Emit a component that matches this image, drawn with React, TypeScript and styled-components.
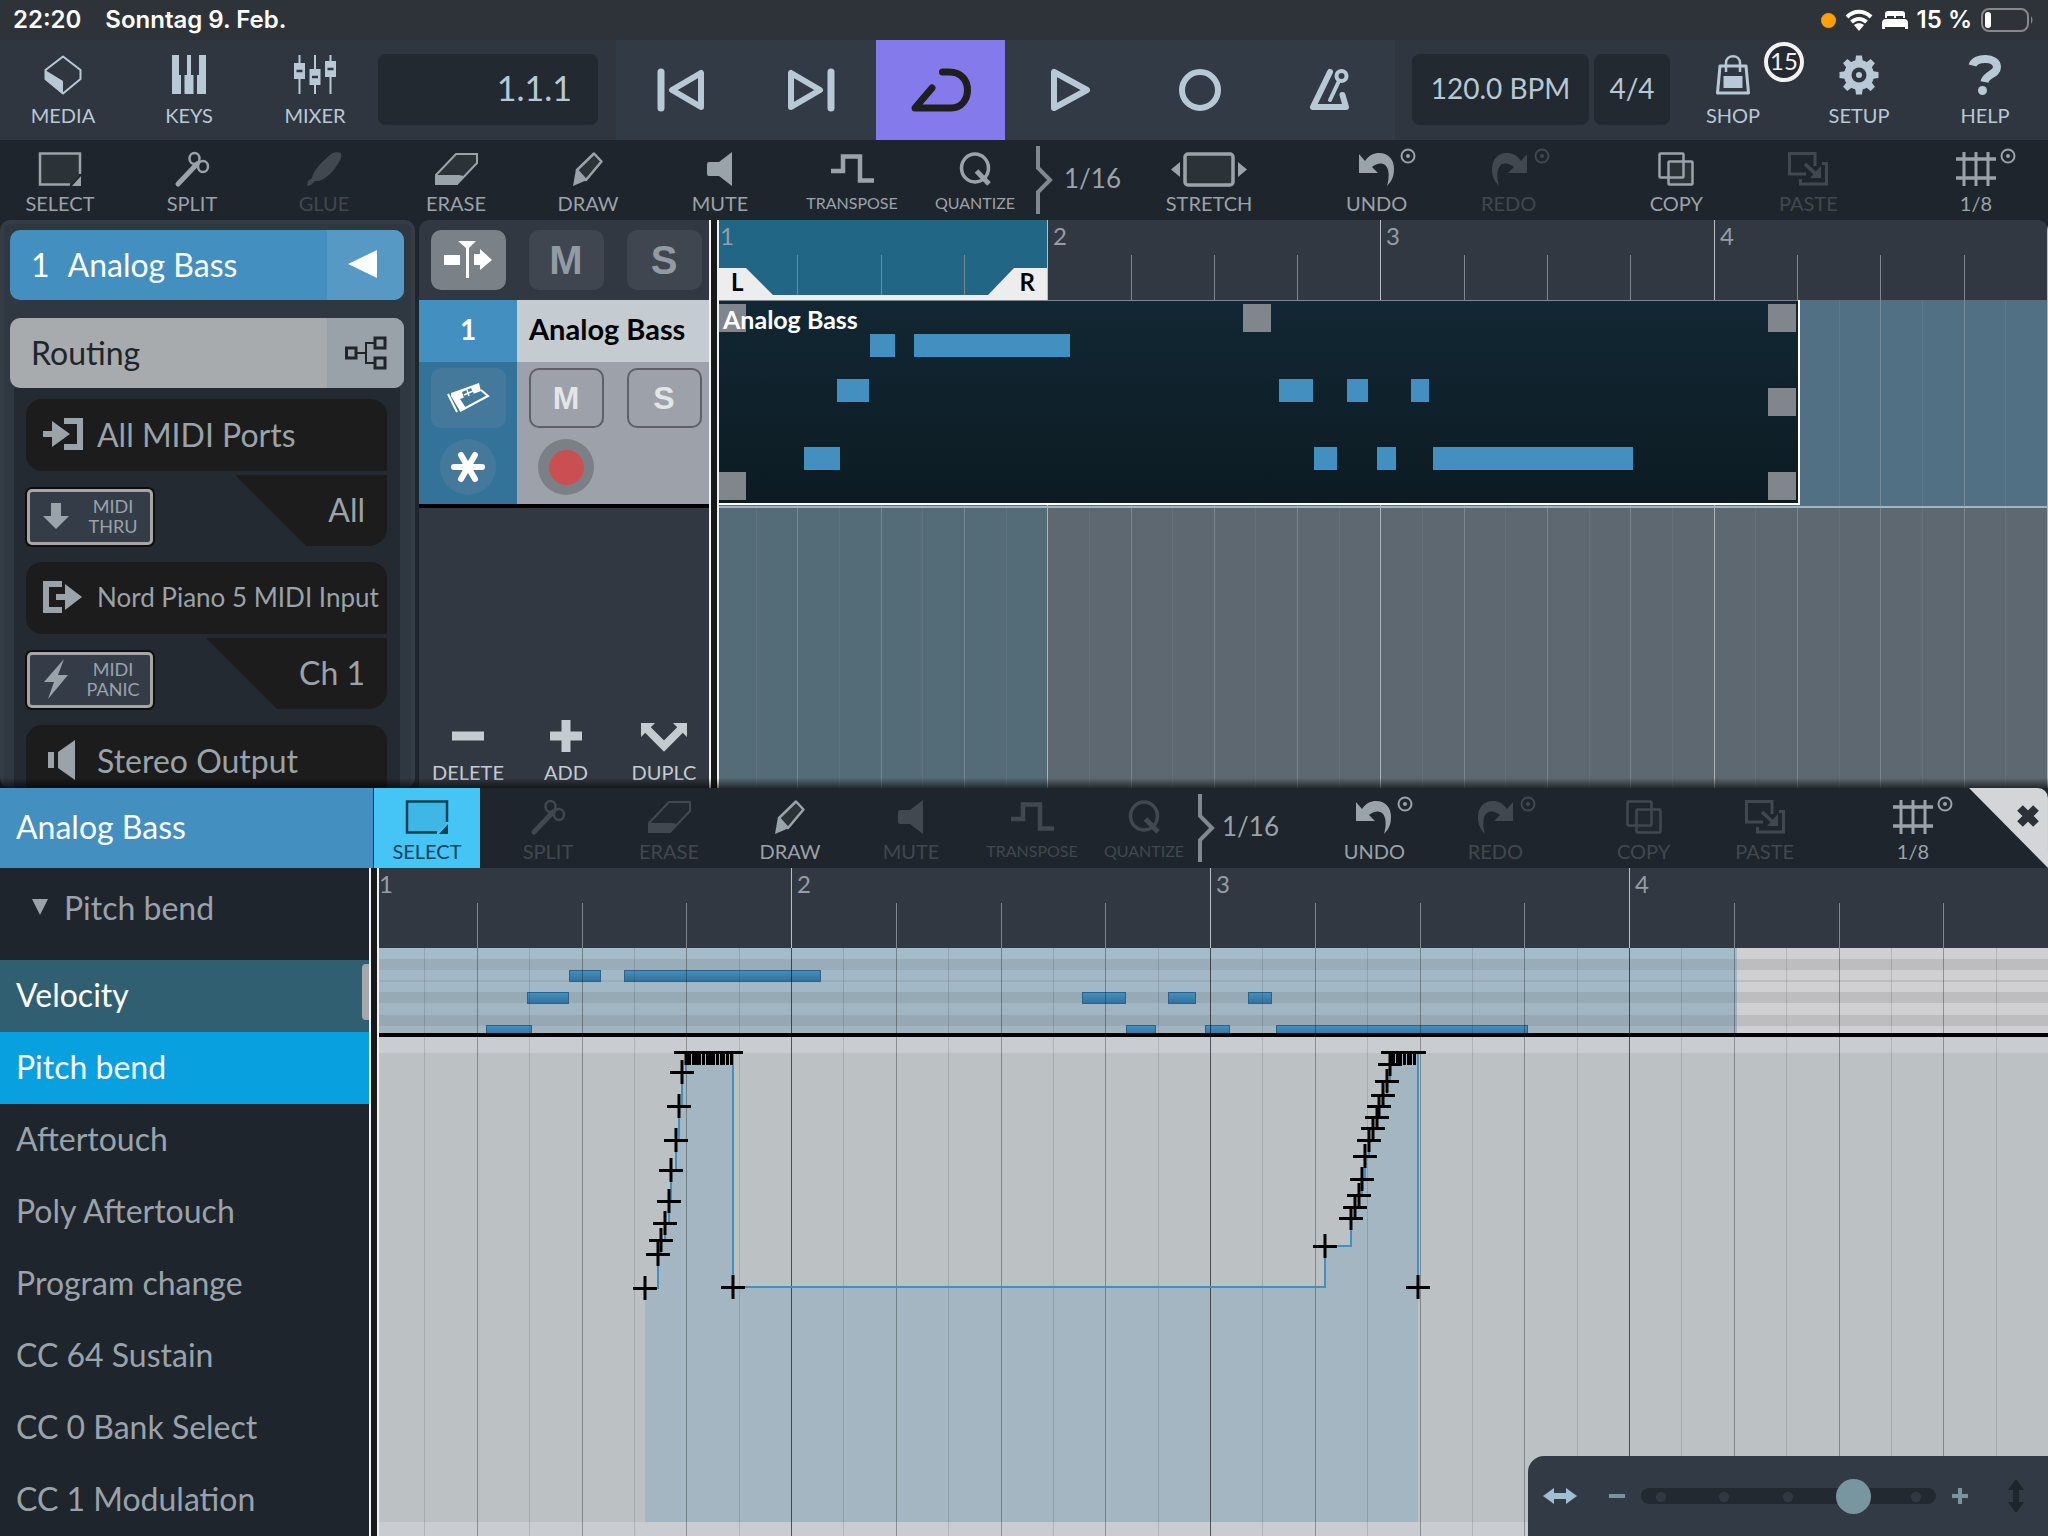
import React from "react";
import styled, { createGlobalStyle, css } from "styled-components";

const GlobalStyle = createGlobalStyle`
  *, *::before, *::after { box-sizing: border-box; }
  html, body { margin: 0; background: #1f252c; }
  body { font-family: Lato, "Open Sans", sans-serif; }
  button { font: inherit; color: inherit; border: 0; padding: 0; background: none; cursor: pointer; }
  h1, h2, p, ul { margin: 0; padding: 0; font-weight: 400; }
  ul { list-style: none; }
  svg { display: block; flex: none; overflow: visible; }
`;

/* ---------- shared ---------- */

const Screen = styled.div`
  display: flex;
  flex-direction: column;
  height: 100vh;
  min-height: 900px;
  overflow: hidden;
  background: #1f252c;
  color: #9aa2aa;
`;

type GlyphProps = { w: number; h: number; children: React.ReactNode };
const Glyph = ({ w, h, children }: GlyphProps) => (
  <svg width={w} height={h} viewBox={`0 0 ${w} ${h}`} fill="none" stroke="currentColor" aria-hidden="true">
    {children}
  </svg>
);

/* ---------- icons ---------- */

const solid = { fill: "currentColor", stroke: "none" };
const tint = { fill: "currentColor", fillOpacity: 0.1 };

const MediaIcon = () => (
  <Glyph w={40} h={40}>
    <path d="M20 1.5 L37.5 15 V24 L20 38.5 L2.5 24 V15 Z" strokeWidth={2} strokeLinejoin="round" />
    <path d="M2 15 L20 26 V39 L2 24.500 Z" {...solid} />
  </Glyph>
);
const KeysIcon = () => (
  <Glyph w={34} h={40}>
    <path d="M0 0 H7 V20 H9 V39 H0 Z M15 0 H19 V20 H21.500 V39 H12.500 V20 H15 Z M27 0 H34 V39 H25 V20 H27 Z" {...solid} />
  </Glyph>
);
const MixerIcon = () => (
  <Glyph w={42} h={40}>
    <path d="M5.500 0 V39 M21 0 V39 M36.500 0 V39" strokeWidth={2} />
    <path d="M0 8 H11 V24 H0 Z M15.500 14 H26.500 V30 H15.500 Z M31 6 H42 V22 H31 Z" {...solid} />
    <path d="M2.500 16 H8.500 M18 22 H24 M33.500 14 H39.500" stroke="#2f3640" strokeWidth={2.5} />
  </Glyph>
);
const PrevIcon = () => (
  <Glyph w={48} h={44}>
    <path d="M4 4 V40" strokeWidth={7} strokeLinecap="round" />
    <path d="M44 5 V39 L15 22 Z" strokeWidth={6} strokeLinejoin="round" />
  </Glyph>
);
const NextIcon = () => (
  <Glyph w={48} h={44}>
    <path d="M44 4 V40" strokeWidth={7} strokeLinecap="round" />
    <path d="M4 5 V39 L33 22 Z" strokeWidth={6} strokeLinejoin="round" />
  </Glyph>
);
const CycleIcon = () => (
  <Glyph w={60} h={44}>
    <path
      d="M31.500 4 H38 C51 4 56.500 13 56.500 22 C56.500 31 51 40 40 40 H4 L21 20"
      strokeWidth={7}
      strokeLinecap="round"
      strokeLinejoin="round"
    />
  </Glyph>
);
const PlayIcon = () => (
  <Glyph w={41} h={44}>
    <path d="M4 4 V40 L37 22 Z" strokeWidth={6} strokeLinejoin="round" />
  </Glyph>
);
const RecordIcon = () => (
  <Glyph w={42} h={42}>
    <circle cx="21" cy="21" r="18" strokeWidth={6} />
  </Glyph>
);
const MetronomeIcon = () => (
  <Glyph w={42} h={44}>
    <path d="M21 4 L4 39 H37 L33.500 27" strokeWidth={6} strokeLinecap="round" strokeLinejoin="round" />
    <circle cx="32.500" cy="8" r="5" strokeWidth={4} />
    <path d="M30 13 L21 32" strokeWidth={4} strokeLinecap="round" />
  </Glyph>
);
const ShopIcon = () => (
  <Glyph w={34} h={40}>
    <path d="M4 11 H30 L32.500 38 H1.500 Z" strokeWidth={3} strokeLinejoin="round" />
    <path d="M10 17 V8 C10 -1 24 -1 24 8 V17" strokeWidth={2.5} />
    <path d="M7.500 21 H26.500 V33 H7.500 Z" {...solid} />
  </Glyph>
);
const GearIcon = () => (
  <Glyph w={42} h={40}>
    {[0, 45, 90, 135, 180, 225, 270, 315].map((a) => (
      <path key={a} d="M17 8 L18 0.500 H24 L25 8 Z" transform={`rotate(${a} 21 20)`} {...solid} strokeLinejoin="round" />
    ))}
    <circle cx="21" cy="20" r="15" {...solid} />
    <circle cx="21" cy="20" r="7.500" fill="#2f3640" stroke="none" />
    <circle cx="21" cy="20" r="3" {...solid} />
  </Glyph>
);
const HelpIcon = () => (
  <Glyph w={34} h={40}>
    <path d="M4.500 10.500 C7 1.500 29 1.500 29 12 C29 19.500 18 19 16.500 27" strokeWidth={8} />
    <circle cx="14.500" cy="35.500" r="4.500" {...solid} />
  </Glyph>
);

const SelectIcon = () => (
  <Glyph w={42} h={34}>
    <path d="M41 22 V1.500 H1 V32.500 H31" strokeWidth={2.5} />
    <path d="M2 2 H40 V24 L32 32 H2 Z" {...tint} stroke="none" />
    <path d="M42 24 V34 H33 Z" {...solid} />
  </Glyph>
);
const SplitIcon = () => (
  <Glyph w={34} h={34}>
    <path d="M3 32 L22 12" strokeWidth={5} strokeLinecap="round" />
    <ellipse cx="19.500" cy="6.500" rx="5" ry="5.500" strokeWidth={2.5} />
    <ellipse cx="28" cy="14.500" rx="5" ry="5.500" strokeWidth={2.5} />
  </Glyph>
);
const GlueIcon = () => (
  <Glyph w={35} h={34}>
    <path d="M0 34 L1 29 L5 26 C6 18 17 8 24 2 C27 0 31 0 34 1 C35 4 34 7 32 10 C27 19 19 27 12 29 L8 29 L4 33 Z" {...solid} />
  </Glyph>
);
const EraseIcon = () => (
  <Glyph w={43} h={34}>
    <path d="M21 2 H42 V11 L22 32 H1 V23 Z" strokeWidth={2} {...tint} />
    <path d="M1 23 H24 L22 33 H0 Z M24 23 L29 24 L22 33 H20 Z" {...solid} />
  </Glyph>
);
const DrawIcon = () => (
  <Glyph w={30} h={34}>
    <path d="M21 1.500 L28.500 9.500 L13 28 L4 18 Z" strokeWidth={2.5} strokeLinejoin="round" {...tint} />
    <path d="M3 17 L14 28 L0 34 Z" {...solid} />
  </Glyph>
);
const MuteIcon = () => (
  <Glyph w={27} h={34}>
    <path d="M2 10 H12 L25 0 V34 L12 24 H2 Q0 24 0 22 V12 Q0 10 2 10 Z" {...solid} />
  </Glyph>
);
const TransposeIcon = () => (
  <Glyph w={43} h={34}>
    <path d="M0 19 H12 V4.500 H29 V28.500 H43" strokeWidth={4.5} />
  </Glyph>
);
const QuantizeIcon = () => (
  <Glyph w={31} h={34}>
    <ellipse cx="15" cy="16" rx="13.500" ry="14" strokeWidth={3.5} />
    <path d="M16.500 19 L29 32" strokeWidth={5} />
  </Glyph>
);
const BracketIcon = () => (
  <Glyph w={16} h={68}>
    <path d="M2 0 V22 L14 34 L2 46 V68" strokeWidth={4} opacity={0.8} />
  </Glyph>
);
const StretchIcon = () => (
  <Glyph w={76} h={34}>
    <rect x="14" y="2" width="48" height="31" rx="3" strokeWidth={3.5} {...tint} />
    <path d="M9 10 V25 L0 17.500 Z M67 10 V25 L76 17.500 Z" {...solid} />
  </Glyph>
);
const HistoryDot = () => (
  <g>
    <circle cx="49" cy="4" r="6.500" strokeWidth={2} />
    <circle cx="49" cy="4" r="2" {...solid} />
  </g>
);
const arrowPath = "M0 2 L6 9 C10 3 15 1 20 1 C30 1 35 8 35 17 C35 24 33 29 28 34 C30 27 30 22 29 18 C27 10 19 10 13 15 L19 21 H0 Z";
const UndoIcon = () => (
  <Glyph w={36} h={34}>
    <path d={arrowPath} {...solid} />
    <HistoryDot />
  </Glyph>
);
const RedoIcon = () => (
  <Glyph w={36} h={34}>
    <path d={arrowPath} transform="translate(36 0) scale(-1 1)" {...solid} />
    <g transform="translate(2 0)">
      <HistoryDot />
    </g>
  </Glyph>
);
const CopyIcon = () => (
  <Glyph w={36} h={34}>
    <rect x="1.500" y="1.500" width="24" height="24" rx="1" strokeWidth={2.5} />
    <rect x="10.500" y="9.500" width="24" height="23" rx="1" strokeWidth={2.5} {...tint} />
  </Glyph>
);
const PasteIcon = () => (
  <Glyph w={40} h={34}>
    <path d="M18 22 H1.500 V1.500 H27 V14" strokeWidth={3} />
    <path d="M17 12 L31 25" strokeWidth={3.5} />
    <path d="M33 14 V26 H22 Z" {...solid} />
    <path d="M34 11.500 H38.500 V32 H12.500 V27" strokeWidth={3} />
  </Glyph>
);
const GridIcon = () => (
  <Glyph w={40} h={34}>
    <path d="M8 0 V34 M20 0 V34 M32 0 V34" strokeWidth={3} />
    <path d="M0 7 H40 M0 26 H40" strokeWidth={3.5} />
    <g transform="translate(3 0)">
      <HistoryDot />
    </g>
  </Glyph>
);

const RoutingIcon = () => (
  <Glyph w={42} h={34}>
    <path d="M12 17 H21 M30 7 H21 V27 H30" strokeWidth={2} />
    <path d="M1.500 12 H11 V22 H1.500 Z M30 2 H40 V12 H30 Z M30 22 H40 V32 H30 Z" strokeWidth={3} />
  </Glyph>
);
const PortInIcon = () => (
  <Glyph w={40} h={32}>
    <path d="M0 13 H9 V3 L27 16 L9 29 V19 H0 Z" {...solid} />
    <path d="M21 3 H37 V29 H21" strokeWidth={6} />
  </Glyph>
);
const PortOutIcon = () => (
  <Glyph w={40} h={32}>
    <path d="M19 3 H3 V29 H19" strokeWidth={6} />
    <path d="M13 13 H22 V3 L39 16 L22 29 V19 H13 Z" {...solid} />
  </Glyph>
);
const OutputIcon = () => (
  <Glyph w={40} h={40}>
    <path d="M5 12 H11 V28 H5 Z M15 12 L32 0 V40 L15 28 Z" {...solid} />
  </Glyph>
);
const DownIcon = () => (
  <Glyph w={26} h={26}>
    <path d="M8 0 H18 V13 H26 L13 26 L0 13 H8 Z" {...solid} />
  </Glyph>
);
const BoltIcon = () => (
  <Glyph w={26} h={40}>
    <path d="M21 0 L1 23 H11 L5 40 L25 16 H15 Z" {...solid} />
  </Glyph>
);
const FollowIcon = () => (
  <Glyph w={48} h={38}>
    <path d="M0 14 H16 V24 H0 Z M30 13 H36 V8 L48 19 L36 29 V24 H30 Z M14 0 H32 L25 7 V37 H22 V7 Z" {...solid} />
  </Glyph>
);
const SynthIcon = () => (
  <Glyph w={42} h={32}>
    <path d="M4 11 L32 1 L34 9 L13 17 L19 26 L13 29 L4 14 Z" {...solid} />
    <path d="M13 29 L41 14 L34 8 M1 12 L10 30" strokeWidth={2} />
    <path d="M15 10 L24 6 L27 12 L17 16 Z" fill="#44799b" stroke="none" />
    <path d="M17 13 L26 9 M20 8 L22 14" strokeWidth={1.5} />
  </Glyph>
);
const AsteriskIcon = () => (
  <Glyph w={34} h={32}>
    <path d="M3 16 H31 M10 4 L24 28 M24 4 L10 28" strokeWidth={6} strokeLinecap="round" />
  </Glyph>
);
const MinusIcon = () => (
  <Glyph w={32} h={32}>
    <path d="M0 16 H32" strokeWidth={9} />
  </Glyph>
);
const PlusIcon = () => (
  <Glyph w={32} h={32}>
    <path d="M0 16 H32 M16 0 V32" strokeWidth={9} />
  </Glyph>
);
const DuplicateIcon = () => (
  <Glyph w={48} h={32}>
    <path d="M6 8 L24 26 L42 8" strokeWidth={8} />
    <path d="M1 3 H15 L1 17 Z M47 3 H33 L47 17 Z" {...solid} />
  </Glyph>
);

/* ---------- status bar ---------- */

const StatusBar = styled.header`
  display: flex;
  align-items: center;
  justify-content: space-between;
  flex: none;
  height: 40px;
  padding: 0 14px 0 13px;
  background: #2d3338;
  color: #fff;
  font: 600 24px/40px Inter, Roboto, sans-serif;
`;
const StatusGroup = styled.div<{ $gap: number }>`
  display: flex;
  align-items: center;
  gap: ${(p) => p.$gap}px;
`;
const PrivacyDot = styled.span`
  width: 15px;
  height: 15px;
  border-radius: 50%;
  background: #ff9f0a;
`;

/* ---------- transport bar ---------- */

const TransportBar = styled.nav`
  display: grid;
  grid-template-columns: 378fr 238fr 779fr 275fr 378fr;
  flex: none;
  height: 100px;
  background: #2f3640;
  color: #b8c9d6;
`;
const BarGroup = styled.div`
  display: grid;
  grid-auto-flow: column;
  grid-auto-columns: 1fr;
`;
const BarButton = styled.button`
  display: flex;
  flex-direction: column;
  align-items: center;
  gap: 8px;
  padding-top: 15px;
  font-size: 20px;
  line-height: 24px;
`;
const BadgeAnchor = styled.span`
  position: relative;
`;
const Badge = styled.span`
  position: absolute;
  left: 48px;
  top: -13px;
  width: 40px;
  height: 40px;
  border: 4px solid #f2f2f2;
  border-radius: 50%;
  background: #232a32;
  color: #f2f2f2;
  font-size: 24px;
  line-height: 30px;
  text-align: center;
`;
const ReadoutCell = styled.div`
  display: flex;
  gap: 5px;
  padding: 14px 18px 15px 0;
`;
const TempoCell = styled(ReadoutCell)`
  padding: 14px 0 15px 17px;
`;
const Readout = styled.button<{ $grow: number; $large?: boolean }>`
  flex: ${(p) => p.$grow} 1 0;
  padding-bottom: 4px;
  border-radius: 8px;
  background: #232931;
  font-size: ${(p) => (p.$large ? 34 : 28)}px;
  ${(p) =>
    p.$large &&
    css`
      padding-right: 26px;
      text-align: right;
    `}
`;
const TransportGroup = styled(BarGroup)`
  background: #323b45;
`;
const TransportButton = styled.button<{ $on?: boolean }>`
  display: grid;
  place-items: center;
  background: ${(p) => (p.$on ? "#857aeb" : "none")};
  color: ${(p) => (p.$on ? "#1f1f1f" : "inherit")};
`;

/* ---------- tool bars ---------- */

const ToolBar = styled.nav`
  display: flex;
  flex: none;
  height: 80px;
  padding-right: 12px;
  background: #1f252c;
`;
const ToolGroup = styled.div<{ $gap: number; $push?: boolean }>`
  display: flex;
  gap: ${(p) => p.$gap}px;
  margin-left: ${(p) => (p.$push ? "auto" : "0")};
`;
const ToolButton = styled.button<{ $width: number; $active?: boolean; $small?: boolean }>`
  display: flex;
  flex-direction: column;
  align-items: center;
  gap: 5px;
  width: ${(p) => p.$width}px;
  padding-top: 12px;
  font-size: ${(p) => (p.$small ? 16 : 20)}px;
  line-height: 24px;
  background: ${(p) => (p.$active ? "#45c4f6" : "none")};
  color: ${(p) => (p.$active ? "#0e4257" : "#9aa2aa")};
  &:disabled { color: #41484f; }
`;
const QuantizeValue = styled.button<{ $tight?: boolean }>`
  display: flex;
  align-items: center;
  gap: ${(p) => (p.$tight ? 8 : 12)}px;
  margin: ${(p) => (p.$tight ? "0 0 0 10px" : "0 28px 0 10px")};
  padding-bottom: 1px;
  font-size: 26px;
  line-height: 64px;
`;
const QuantizeText = styled.span`
  padding-bottom: 4px;
`;

type Tool = { label: string; icon: () => React.ReactElement; off?: boolean; active?: boolean; small?: boolean; width?: number };
const Tools = ({ items, width }: { items: Tool[]; width: number }) => (
  <>
    {items.map(({ label, icon: Icon, off, active, small, width: own }) => (
      <ToolButton key={label} type="button" disabled={off} $active={active} $small={small} $width={own ?? width}>
        <Icon />
        {label}
      </ToolButton>
    ))}
  </>
);

/* ---------- arrange area ---------- */

const Arrange = styled.main`
  position: relative;
  display: grid;
  grid-template-columns: 415px 294px 10px minmax(0, 1fr);
  flex: 568 1 0;
  min-height: 0;
  &::after {
    content: "";
    position: absolute;
    inset: auto 0 0;
    height: 10px;
    background: linear-gradient(transparent, rgba(0, 0, 0, 0.6));
    pointer-events: none;
  }
`;
const Inspector = styled.section`
  display: flex;
  flex-direction: column;
  min-height: 0;
  overflow: hidden;
  padding: 6px 7px 0 6px;
  border: 4px solid #343c46;
  border-bottom: 0;
  border-radius: 10px;
  background: #2f3740;
`;
const SectionHeader = styled.button<{ $tone: "blue" | "grey" }>`
  display: grid;
  grid-template-columns: 1fr 77px;
  align-items: stretch;
  flex: none;
  height: 70px;
  overflow: hidden;
  border-radius: 10px;
  font-size: 32px;
  line-height: 70px;
  text-align: left;
  background: ${(p) => (p.$tone === "blue" ? "#438fbf" : "#a7abae")};
  color: ${(p) => (p.$tone === "blue" ? "#fff" : "#20252b")};
  & + & { margin-top: 18px; }
`;
const SectionTitle = styled.span`
  display: flex;
  gap: 18px;
  padding-left: 21px;
`;
const SectionSide = styled.span<{ $tone: "blue" | "grey" }>`
  display: grid;
  place-items: center;
  background: ${(p) => (p.$tone === "blue" ? "#5699c5" : "#98a2a8")};
`;
const RoutingList = styled.div`
  display: flex;
  flex-direction: column;
  gap: 16px;
  flex: 1;
  min-height: 0;
  margin: 0 4px;
  padding: 11px 13px 0 12px;
  overflow: hidden;
  background: #232a32;
`;
const RoutingBlock = styled.div`
  display: flex;
  flex-direction: column;
  flex: none;
  gap: 4px;
`;
const PortButton = styled.button<{ $small?: boolean }>`
  display: flex;
  align-items: center;
  gap: 14px;
  height: 72px;
  padding: 0 0 2px 17px;
  overflow: hidden;
  border-radius: 16px 16px 0 16px;
  background: #1c1c1c;
  font-size: ${(p) => (p.$small ? 26 : 32)}px;
  white-space: nowrap;
`;
const SubRow = styled.div`
  display: flex;
  align-items: flex-end;
  justify-content: space-between;
  height: 71px;
`;
const MidiButton = styled.button`
  display: grid;
  grid-template-columns: 52px 1fr;
  align-items: center;
  justify-items: center;
  width: 128px;
  height: 58px;
  padding: 0 6px 2px 0;
  border: 4px solid #a6a6a6;
  outline: 2px solid #0d0d0d;
  outline-offset: -1px;
  border-radius: 6px;
  background: #343d47;
  font-size: 18px;
  line-height: 20px;
`;
const ChannelButton = styled.button<{ $width: number }>`
  width: ${(p) => p.$width}px;
  height: 71px;
  padding: 0 22px 2px 0;
  border-bottom-right-radius: 18px;
  background: #1c1c1c;
  clip-path: polygon(0 0, 100% 0, 100% 100%, 71px 100%);
  font-size: 32px;
  text-align: right;
`;

const TrackPanel = styled.section`
  display: flex;
  flex-direction: column;
  margin-left: 4px;
  min-height: 0;
  overflow: hidden;
  border-radius: 10px 0 0 0;
  background: #323841;
`;
const TrackGrid = styled.div`
  display: grid;
  grid-template-columns: repeat(3, 98px);
  justify-items: center;
`;
const GlobalRow = styled(TrackGrid)`
  flex: none;
  height: 80px;
  padding-top: 10px;
`;
const StateButton = styled.button<{ $look: "lit" | "dim" | "outline" | "tint" }>`
  display: grid;
  place-items: center;
  width: 75px;
  height: 60px;
  border-radius: 10px;
  font-family: "Liberation Sans", sans-serif;
  font-weight: 700;
  font-size: ${(p) => (p.$look === "dim" ? 40 : 32)}px;
  line-height: 60px;
  ${(p) => p.$look === "lit" && "background: #7a8287; color: #fff;"}
  ${(p) => p.$look === "dim" && "background: #3f464f; color: #929ba3;"}
  ${(p) => p.$look === "outline" && "box-shadow: inset 0 0 0 2px #5d6069; color: #e4e5e6;"}
  ${(p) => p.$look === "tint" && "background: #44799b; color: #fff;"}
`;
const Track = styled.article`
  display: grid;
  grid-template-columns: 98px 1fr;
  grid-template-rows: 62px 142px;
  flex: none;
  border-bottom: 4px solid #000;
  font-weight: 700;
  font-size: 28px;
  line-height: 58px;
`;
const TrackNumber = styled.div`
  background: #438fbf;
  color: #fff;
  text-align: center;
`;
const TrackName = styled.h2`
  padding-left: 12px;
  background: #c4cbd1;
  color: #000;
  font-size: 29px;
  font-weight: 700;
  white-space: nowrap;
`;
const TrackCell = styled.div<{ $bg: string; $cols: number }>`
  display: grid;
  grid-template-columns: repeat(${(p) => p.$cols}, 98px);
  grid-template-rows: 60px 56px;
  justify-items: center;
  gap: 11px 0;
  padding-top: 6px;
  background: ${(p) => p.$bg};
`;
const RoundButton = styled.button<{ $bg: string }>`
  display: grid;
  place-items: center;
  width: 56px;
  height: 56px;
  border-radius: 50%;
  background: ${(p) => p.$bg};
  color: #fff;
`;
const RecordDot = styled.span`
  width: 35px;
  height: 35px;
  border-radius: 50%;
  background: #ca4f50;
`;
const TrackActions = styled(TrackGrid)`
  margin-top: auto;
  padding-bottom: 4px;
  color: #c4cbd1;
`;
const TrackAction = styled.button`
  display: flex;
  flex-direction: column;
  align-items: center;
  gap: 8px;
  font-size: 20px;
  line-height: 24px;
`;
const Splitter = styled.div`
  border: solid #f2f2f2;
  border-width: 0 2px;
  background: #17191b;
`;

const Timeline = styled.section`
  display: flex;
  flex-direction: column;
  min-width: 0;
  min-height: 0;
  overflow: hidden;
`;
const Ruler = styled.div`
  position: relative;
  flex: none;
  height: 80px;
  overflow: hidden;
  background: #323841;
`;
const UpperRuler = styled(Ruler)`
  border-top-right-radius: 10px;
`;
const Fill = styled.svg`
  position: absolute;
  inset: 0;
  width: 100%;
  height: 100%;
`;
const BarNumber = styled.span`
  position: absolute;
  top: 2px;
  color: #969da5;
  font-size: 24px;
  line-height: 28px;
`;
const LoopRange = styled.div<{ $clear?: boolean }>`
  position: absolute;
  inset: 0 auto 0 0;
  width: 328px;
  background: ${(p) => (p.$clear ? "none" : "#216685")};
`;
const Locator = styled.div<{ $side: "left" | "right" }>`
  position: absolute;
  bottom: 0;
  ${(p) => p.$side}: 0;
  width: 164px;
  height: 32px;
  padding: 0 12px;
  background: #ededed;
  color: #000;
  font-size: 24px;
  font-weight: 700;
  line-height: 28px;
  text-align: ${(p) => p.$side};
  clip-path: ${(p) =>
    p.$side === "left"
      ? "polygon(0 0, 27px 0, 54px 27px, 100% 27px, 100% 100%, 0 100%)"
      : "polygon(100% 0, calc(100% - 33px) 0, calc(100% - 59px) 27px, 0 27px, 0 100%, 100% 100%)"};
`;
const Lane = styled.div`
  position: relative;
  flex: none;
  height: 208px;
  border-bottom: 2px solid #a4b4bf;
  background: #527084;
`;
const EmptyLanes = styled.div`
  position: relative;
  flex: 1;
  min-height: 0;
  background: linear-gradient(90deg, #546b78 328px, #5d6870 328px);
`;
const Clip = styled.div`
  position: absolute;
  left: 0;
  top: 0;
  width: 1081px;
  height: 205px;
  border: solid #fff;
  border-width: 0 2px 2px 0;
  box-shadow: inset 0 1px 0 #7d868d;
  background: linear-gradient(#122734, #0c1b22);
`;
const ClipName = styled.span`
  position: absolute;
  left: 4px;
  top: 4px;
  color: #fff;
  font-size: 25px;
  font-weight: 700;
  line-height: 30px;
`;
const Block = styled.span.attrs<{ $x: number; $y: number; $w: number; $h: number }>((p) => ({
  style: { left: p.$x, top: p.$y, width: p.$w, height: p.$h },
}))<{ $x: number; $y: number; $w: number; $h: number }>`
  position: absolute;
`;
const ClipNote = styled(Block)`
  background: #438fbf;
`;
const ClipHandle = styled(Block)`
  background: #80868b;
`;

/* ---------- key editor ---------- */

const Editor = styled.section`
  display: flex;
  flex-direction: column;
  flex: 748 1 0;
  min-height: 0;
`;
const EditorBar = styled(ToolBar)`
  padding-right: 0;
`;
const EditorTitle = styled.h1`
  flex: none;
  width: 373px;
  margin-right: 1px;
  padding-left: 16px;
  background: #438fbf;
  color: #fff;
  font-size: 32px;
  line-height: 78px;
`;
const CloseButton = styled.button`
  display: grid;
  place-items: start;
  width: 79px;
  margin-left: 3px;
  padding: 17px 0 0 48px;
  border-top-right-radius: 10px;
  background: #d3d5d8;
  color: #2b3138;
  clip-path: polygon(0 0, 100% 0, 100% 100%);
`;
const EditorBody = styled.div`
  display: grid;
  grid-template-columns: 369px 10px minmax(0, 1fr);
  flex: 1;
  min-height: 0;
`;
const ControllerList = styled.div`
  position: relative;
  display: flex;
  flex-direction: column;
  overflow: hidden;
  font-size: 32px;
`;
const ControllerPicker = styled.button`
  display: flex;
  align-items: center;
  gap: 16px;
  flex: none;
  height: 92px;
  padding: 0 0 14px 32px;
`;
const ControllerItem = styled.button<{ $state?: "used" | "current" }>`
  display: block;
  width: 100%;
  height: 72px;
  padding: 0 0 4px 16px;
  text-align: left;
  background: ${(p) => (p.$state === "used" ? "#315f72" : p.$state === "current" ? "#08a0df" : "none")};
  color: ${(p) => (p.$state ? "#fff" : "inherit")};
`;
const ScrollThumb = styled.span`
  position: absolute;
  right: 0;
  top: 96px;
  width: 7px;
  height: 56px;
  border-radius: 4px 0 0 4px;
  background: #a3a8ad;
`;
const NoteStrip = styled.div`
  position: relative;
  flex: none;
  height: 89px;
  overflow: hidden;
  border-bottom: 4px solid #000;
  background: linear-gradient(
    #d0d0d2 11px, #bdbdbf 11px 22px, #d0d0d2 22px 32px, #bdbdbf 32px 34px, #d0d0d2 34px 44px,
    #bdbdbf 44px 55px, #d0d0d2 55px 67px, #bdbdbf 67px 78px, #d0d0d2 78px
  );
`;
const StripRange = styled.div`
  position: absolute;
  inset: 0 auto 0 0;
  width: 1358px;
  background: linear-gradient(
    #a4bbca 11px, #98adb9 11px 22px, #a3b8c6 22px 32px, #98adb9 32px 34px, #a3b8c6 34px 44px,
    #96aab6 44px 55px, #a1b5c2 55px 67px, #95a8b4 67px 78px, #a1b4c0 78px
  );
`;
const StripNote = styled(Block)`
  border: 1px solid #2d6285;
  background: linear-gradient(#438fbf, #34729b);
`;
const Automation = styled.div`
  position: relative;
  flex: 1;
  min-height: 0;
  padding: 16px 0 14px;
  overflow: hidden;
  background: #c9cdd1;
`;
const AutomationGround = styled.div`
  height: 100%;
  background: #bcc1c4;
`;
const CurveClip = styled.div`
  position: absolute;
  inset: 0 0 14px;
  overflow: hidden;
`;
const ZoomBar = styled.div`
  position: absolute;
  right: 0;
  bottom: 0;
  display: flex;
  align-items: center;
  gap: 16px;
  height: 80px;
  padding: 0 24px 0 15px;
  border-top-left-radius: 16px;
  background: #323b45;
  color: #7896a0;
`;
const ZoomStep = styled.button`
  color: inherit;
`;
const ZoomAxis = styled.button<{ $on?: boolean }>`
  margin: ${(p) => (p.$on ? "0 16px 0 0" : "0 0 0 24px")};
  color: ${(p) => (p.$on ? "#a1c0d1" : "#1f252c")};
`;
const ZoomSlider = styled.input`
  appearance: none;
  width: 295px;
  height: 16px;
  margin: 0;
  border-radius: 8px;
  background:
    radial-gradient(circle at 20px 9px, #323841 5px, transparent 5px),
    radial-gradient(circle at 83px 9px, #323841 5px, transparent 5px),
    radial-gradient(circle at 147px 9px, #323841 5px, transparent 5px),
    radial-gradient(circle at 275px 9px, #323841 5px, transparent 5px),
    #232931;
  &::-webkit-slider-thumb {
    appearance: none;
    width: 35px;
    height: 35px;
    border-radius: 50%;
    background: #7896a0;
  }
`;

/* ---------- data ---------- */

const BARS = [1, 2, 3, 4];
const beats = (first: number, step: number, count: number) => Array.from({ length: count }, (_, i) => first + step * i);

const clipNotes: [number, number, number][] = [
  [151, 34, 25], [195, 34, 156], [118, 79, 32], [85, 147, 36],
  [560, 79, 34], [628, 79, 21], [692, 79, 18],
  [595, 147, 23], [658, 147, 19], [714, 147, 200],
];
const clipHandles: [number, number][] = [[0, 4], [524, 4], [1049, 4], [1049, 88], [1049, 172], [0, 172]];

const stripNotes: [number, number, number][] = [
  [190, 22, 32], [245, 22, 197], [148, 44, 42], [107, 77, 46],
  [703, 44, 44], [789, 44, 28], [869, 44, 24],
  [747, 77, 30], [826, 77, 25], [897, 77, 252],
];

const points: [number, number][] = [
  [266, 251], [279, 217], [282, 203], [286, 186], [290, 164], [292, 133], [297, 103], [300, 69], [303, 35],
  [307, 15], [354, 250], [946, 209], [972, 181], [976, 170], [980, 158], [983, 142], [986, 119], [990, 103],
  [994, 91], [998, 80], [1000, 69], [1004, 58], [1008, 44], [1011, 27], [1014, 15], [1039, 250],
];
/* runs of merged markers pinned to the top of the lane: start and end */
const topRuns: [number, number][] = [
  [306, 312], [313, 322], [323, 326], [327, 336], [337, 340], [341, 346], [347, 350], [351, 354],
  [1010, 1013], [1014, 1016], [1017, 1023], [1024, 1027], [1028, 1033], [1034, 1037],
];

const curve = points.reduce((d, [x, y], i) => (i === 0 ? `M${x} ${y}` : `${d} H${x} V${y}`), "");

const controllers: { name: string; state?: "used" | "current" }[] = [
  { name: "Velocity", state: "used" },
  { name: "Pitch bend", state: "current" },
  { name: "Aftertouch" },
  { name: "Poly Aftertouch" },
  { name: "Program change" },
  { name: "CC 64 Sustain" },
  { name: "CC 0 Bank Select" },
  { name: "CC 1 Modulation" },
];

/* ---------- timeline drawings ---------- */

type ScaleProps = { first: number; step: number };
const RulerTicks = ({ first, step }: ScaleProps) => (
  <Fill aria-hidden="true" shapeRendering="crispEdges">
    {beats(first, step, 48).map((x, i) => (
      <rect key={i} x={Math.round(x)} y={i % 4 ? 35 : 0} width={1} height="100%" fill={i % 4 ? "#7f858c" : "#b9bec4"} />
    ))}
  </Fill>
);
const GridLines = ({ first, step, light }: ScaleProps & { light?: boolean }) => (
  <Fill aria-hidden="true" shapeRendering="crispEdges">
    {beats(first, step / 2, 96).map((x, i) => (
      <rect
        key={i}
        x={Math.round(x)}
        y="0"
        width={1}
        height="100%"
        fill={light ? "#fff" : "#000"}
        fillOpacity={light ? (i % 8 === 0 ? 0.5 : i % 2 ? 0.06 : 0.2) : i % 8 === 0 ? 0.6 : i % 2 ? 0.12 : 0.3}
      />
    ))}
  </Fill>
);
const BarNumbers = ({ first, step }: ScaleProps) => (
  <>
    {BARS.map((n) => (
      <BarNumber key={n} style={{ left: Math.max(0, Math.round(first + (n - 1) * step * 4 + 6)) }}>
        {n}
      </BarNumber>
    ))}
  </>
);

const arrange = { first: -5, step: 83.3 };
const editor = { first: -7, step: 104.75 };

/* ---------- app ---------- */

export default function App() {
  return (
    <Screen>
      <GlobalStyle />
      <StatusBar>
        <StatusGroup $gap={24}>
          <span>22:20</span>
          <span>Sonntag 9. Feb.</span>
        </StatusGroup>
        <StatusGroup $gap={9}>
          <PrivacyDot />
          <Glyph w={28} h={22}>
            <path d="M2 8 C9 1 19 1 26 8 M6.500 13 C11 9 17 9 21.500 13" strokeWidth={4} />
            <path d="M9 16 C12 13.500 16 13.500 19 16 L14 22 Z" {...solid} />
          </Glyph>
          <Glyph w={26} h={18}>
            <path d="M3 7 V3 Q3 0 6 0 H20 Q23 0 23 3 V7 H21 V5 H14 V7 H12 V5 H5 V7 Z M0 12 Q0 8 4 8 H22 Q26 8 26 12 V18 H23 V16 H3 V18 H0 Z" {...solid} />
          </Glyph>
          <span>15 %</span>
          <Glyph w={53} h={24}>
            <rect x="1" y="1" width="46" height="22" rx="7" stroke="#85898c" strokeWidth={2} />
            <rect x="4" y="4" width="6" height="16" rx="3" {...solid} />
            <path d="M50 8 Q53 12 50 16 Z" fill="#85898c" stroke="none" />
          </Glyph>
        </StatusGroup>
      </StatusBar>

      <TransportBar aria-label="Transport">
        <BarGroup>
          <BarButton type="button"><MediaIcon />MEDIA</BarButton>
          <BarButton type="button"><KeysIcon />KEYS</BarButton>
          <BarButton type="button"><MixerIcon />MIXER</BarButton>
        </BarGroup>
        <ReadoutCell>
          <Readout type="button" $grow={1} $large>1.1.1</Readout>
        </ReadoutCell>
        <TransportGroup>
          <TransportButton type="button" aria-label="Back to start"><PrevIcon /></TransportButton>
          <TransportButton type="button" aria-label="Forward to end"><NextIcon /></TransportButton>
          <TransportButton type="button" aria-label="Cycle" aria-pressed="true" $on><CycleIcon /></TransportButton>
          <TransportButton type="button" aria-label="Play"><PlayIcon /></TransportButton>
          <TransportButton type="button" aria-label="Record"><RecordIcon /></TransportButton>
          <TransportButton type="button" aria-label="Metronome"><MetronomeIcon /></TransportButton>
        </TransportGroup>
        <TempoCell>
          <Readout type="button" $grow={177}>120.0 BPM</Readout>
          <Readout type="button" $grow={76}>4/4</Readout>
        </TempoCell>
        <BarGroup>
          <BarButton type="button">
            <BadgeAnchor>
              <ShopIcon />
              <Badge>15</Badge>
            </BadgeAnchor>
            SHOP
          </BarButton>
          <BarButton type="button"><GearIcon />SETUP</BarButton>
          <BarButton type="button"><HelpIcon />HELP</BarButton>
        </BarGroup>
      </TransportBar>

      <ToolBar aria-label="Arrange tools">
        <ToolGroup $gap={12}>
          <Tools
            width={120}
            items={[
              { label: "SELECT", icon: SelectIcon },
              { label: "SPLIT", icon: SplitIcon },
              { label: "GLUE", icon: GlueIcon, off: true },
              { label: "ERASE", icon: EraseIcon },
              { label: "DRAW", icon: DrawIcon },
              { label: "MUTE", icon: MuteIcon },
              { label: "TRANSPOSE", icon: TransposeIcon, small: true },
              { label: "QUANTIZE", icon: QuantizeIcon, small: true, width: 102 },
            ]}
          />
        </ToolGroup>
        <QuantizeValue type="button"><BracketIcon /><QuantizeText>1/16</QuantizeText></QuantizeValue>
        <ToolGroup $gap={12}>
          <Tools width={120} items={[{ label: "STRETCH", icon: StretchIcon }]} />
        </ToolGroup>
        <ToolGroup $gap={12} $push>
          <Tools width={120} items={[{ label: "UNDO", icon: UndoIcon }, { label: "REDO", icon: RedoIcon, off: true }]} />
        </ToolGroup>
        <ToolGroup $gap={12} $push>
          <Tools width={120} items={[{ label: "COPY", icon: CopyIcon }, { label: "PASTE", icon: PasteIcon, off: true }]} />
        </ToolGroup>
        <ToolGroup $gap={12} $push>
          <Tools width={120} items={[{ label: "1/8", icon: GridIcon }]} />
        </ToolGroup>
      </ToolBar>

      <Arrange>
        <Inspector>
          <SectionHeader type="button" $tone="blue">
            <SectionTitle><span>1</span><span>Analog Bass</span></SectionTitle>
            <SectionSide $tone="blue">
              <Glyph w={36} h={30}><path d="M0 14 L29 0 V28 Z" {...solid} /></Glyph>
            </SectionSide>
          </SectionHeader>
          <SectionHeader type="button" $tone="grey">
            <SectionTitle>Routing</SectionTitle>
            <SectionSide $tone="grey"><RoutingIcon /></SectionSide>
          </SectionHeader>
          <RoutingList>
            <RoutingBlock>
              <PortButton type="button"><PortInIcon />All MIDI Ports</PortButton>
              <SubRow>
                <MidiButton type="button"><DownIcon /><span>MIDI<br />THRU</span></MidiButton>
                <ChannelButton type="button" $width={152}>All</ChannelButton>
              </SubRow>
            </RoutingBlock>
            <RoutingBlock>
              <PortButton type="button" $small><PortOutIcon />Nord Piano 5 MIDI Input</PortButton>
              <SubRow>
                <MidiButton type="button"><BoltIcon /><span>MIDI<br />PANIC</span></MidiButton>
                <ChannelButton type="button" $width={181}>Ch 1</ChannelButton>
              </SubRow>
            </RoutingBlock>
            <RoutingBlock>
              <PortButton type="button"><OutputIcon />Stereo Output</PortButton>
            </RoutingBlock>
          </RoutingList>
        </Inspector>

        <TrackPanel>
          <GlobalRow>
            <StateButton type="button" aria-label="Follow playhead" $look="lit"><FollowIcon /></StateButton>
            <StateButton type="button" aria-label="Mute all" $look="dim">M</StateButton>
            <StateButton type="button" aria-label="Solo all" $look="dim">S</StateButton>
          </GlobalRow>
          <Track>
            <TrackNumber>1</TrackNumber>
            <TrackName>Analog Bass</TrackName>
            <TrackCell $bg="#337299" $cols={1}>
              <StateButton type="button" aria-label="Instrument" $look="tint"><SynthIcon /></StateButton>
              <RoundButton type="button" aria-label="Freeze" $bg="#44799b"><AsteriskIcon /></RoundButton>
            </TrackCell>
            <TrackCell $bg="#9da1aa" $cols={2}>
              <StateButton type="button" aria-label="Mute" $look="outline">M</StateButton>
              <StateButton type="button" aria-label="Solo" $look="outline">S</StateButton>
              <RoundButton type="button" aria-label="Record enable" $bg="#7a8086"><RecordDot /></RoundButton>
            </TrackCell>
          </Track>
          <TrackActions>
            <TrackAction type="button"><MinusIcon />DELETE</TrackAction>
            <TrackAction type="button"><PlusIcon />ADD</TrackAction>
            <TrackAction type="button"><DuplicateIcon />DUPLC</TrackAction>
          </TrackActions>
        </TrackPanel>

        <Splitter />

        <Timeline aria-label="Arrangement">
          <UpperRuler>
            <LoopRange />
            <RulerTicks {...arrange} />
            <BarNumbers {...arrange} />
            <LoopRange $clear>
              <Locator $side="left">L</Locator>
              <Locator $side="right">R</Locator>
            </LoopRange>
          </UpperRuler>
          <Lane>
            <GridLines {...arrange} light />
            <Clip>
              {clipHandles.map(([x, y]) => (
                <ClipHandle key={`${x}-${y}`} $x={x} $y={y} $w={x ? 28 : 27} $h={28} />
              ))}
              {clipNotes.map(([x, y, w]) => (
                <ClipNote key={x} $x={x} $y={y} $w={w} $h={23} />
              ))}
              <ClipName>Analog Bass</ClipName>
            </Clip>
          </Lane>
          <EmptyLanes>
            <GridLines {...arrange} light />
          </EmptyLanes>
        </Timeline>
      </Arrange>

      <Editor>
        <EditorBar aria-label="Editor tools">
          <EditorTitle>Analog Bass</EditorTitle>
          <ToolGroup $gap={15}>
            <Tools
              width={106}
              items={[
                { label: "SELECT", icon: SelectIcon, active: true },
                { label: "SPLIT", icon: SplitIcon, off: true },
                { label: "ERASE", icon: EraseIcon, off: true },
                { label: "DRAW", icon: DrawIcon },
                { label: "MUTE", icon: MuteIcon, off: true },
                { label: "TRANSPOSE", icon: TransposeIcon, off: true, small: true },
                { label: "QUANTIZE", icon: QuantizeIcon, off: true, small: true, width: 88 },
              ]}
            />
          </ToolGroup>
          <QuantizeValue type="button" $tight><BracketIcon /><QuantizeText>1/16</QuantizeText></QuantizeValue>
          <ToolGroup $gap={15} $push>
            <Tools width={106} items={[{ label: "UNDO", icon: UndoIcon }, { label: "REDO", icon: RedoIcon, off: true }]} />
          </ToolGroup>
          <ToolGroup $gap={15} $push>
            <Tools width={106} items={[{ label: "COPY", icon: CopyIcon, off: true }, { label: "PASTE", icon: PasteIcon, off: true }]} />
          </ToolGroup>
          <ToolGroup $gap={15} $push>
            <Tools width={106} items={[{ label: "1/8", icon: GridIcon }]} />
          </ToolGroup>
          <CloseButton type="button" aria-label="Close editor">
            <Glyph w={22} h={22}>
              <path d="M3 3 L19 19 M19 3 L3 19" strokeWidth={8} />
            </Glyph>
          </CloseButton>
        </EditorBar>

        <EditorBody>
          <ControllerList>
            <ControllerPicker type="button">
              <Glyph w={16} h={16}><path d="M0 0 H16 L8 16 Z" {...solid} /></Glyph>
              Pitch bend
            </ControllerPicker>
            <ul>
              {controllers.map(({ name, state }) => (
                <li key={name}>
                  <ControllerItem type="button" $state={state}>{name}</ControllerItem>
                </li>
              ))}
            </ul>
            <ScrollThumb />
          </ControllerList>

          <Splitter />

          <Timeline aria-label="Key editor">
            <Ruler>
              <RulerTicks {...editor} />
              <BarNumbers {...editor} />
            </Ruler>
            <NoteStrip>
              <StripRange />
              {stripNotes.map(([x, y, w]) => (
                <StripNote key={x} $x={x} $y={y} $w={w} $h={12} />
              ))}
              <GridLines {...editor} />
            </NoteStrip>
            <Automation>
              <AutomationGround />
              <CurveClip>
                <Fill aria-hidden="true">
                  <path d={`${curve} V2000 H266 Z`} fill="#a3b6c2" />
                </Fill>
              </CurveClip>
              <GridLines {...editor} />
              <Fill aria-hidden="true">
                <path d={curve} fill="none" stroke="#438fbf" strokeWidth={2} />
                {points.map(([x, y]) => (
                  <path
                    key={`${x}-${y}`}
                    d={`M${x - 12} ${y + 0.5} H${x + 12} M${x} ${y === 15 ? y : y - 12} V${y === 15 ? 28 : y + 12}`}
                    stroke="#000"
                    strokeWidth={3}
                  />
                ))}
                <path d="M295 15.500 H364 M1003 15.500 H1047" stroke="#000" strokeWidth={3} />
                {topRuns.map(([from, to]) => (
                  <rect key={from} x={from} y={15} width={to - from} height={13} fill="#000" />
                ))}
              </Fill>
              <ZoomBar>
                <ZoomAxis type="button" aria-label="Horizontal zoom" $on>
                  <Glyph w={34} h={16}>
                    <path d="M0 8 L11 0 V5 H23 V0 L34 8 L23 16 V11 H11 V16 Z" {...solid} />
                  </Glyph>
                </ZoomAxis>
                <ZoomStep type="button" aria-label="Zoom out">
                  <Glyph w={16} h={16}><path d="M0 8 H16" strokeWidth={4} /></Glyph>
                </ZoomStep>
                <ZoomSlider type="range" min={0} max={100} defaultValue={75} aria-label="Zoom" />
                <ZoomStep type="button" aria-label="Zoom in">
                  <Glyph w={16} h={16}><path d="M0 8 H16 M8 0 V16" strokeWidth={4} /></Glyph>
                </ZoomStep>
                <ZoomAxis type="button" aria-label="Vertical zoom">
                  <Glyph w={16} h={34}>
                    <path d="M8 0 L16 11 H11 V23 H16 L8 34 L0 23 H5 V11 H0 Z" {...solid} />
                  </Glyph>
                </ZoomAxis>
              </ZoomBar>
            </Automation>
          </Timeline>
        </EditorBody>
      </Editor>
    </Screen>
  );
}
